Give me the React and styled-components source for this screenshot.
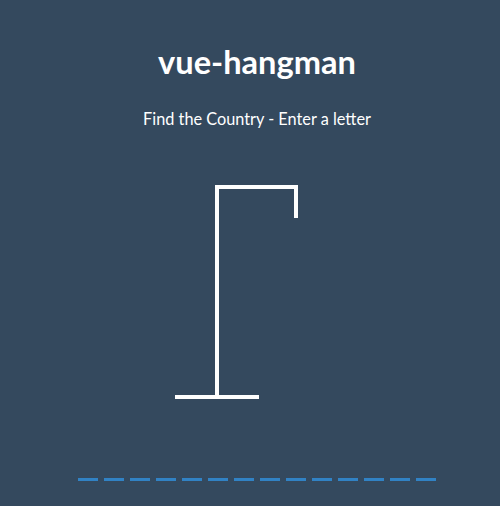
import React from "react";
import styled, { createGlobalStyle } from "styled-components";

const Global = createGlobalStyle`
  html, body { margin: 0; padding: 0; background: #34495e; }
  body { font-family: Lato, "Open Sans", sans-serif; color: #fff; }
`;

const Page = styled.div`
  width: 500px;
  height: 506px;
  box-sizing: border-box;
  padding-left: 14px;
  background: #34495e;
  display: flex;
  flex-direction: column;
  align-items: center;
  overflow: hidden;
`;

const Title = styled.h1`
  margin: 43px 0 0;
  font-size: 32.6px;
  font-weight: 700;
  line-height: 38px;
  color: #fff;
`;

const Subtitle = styled.p`
  margin: 28px 0 0;
  font-size: 16.3px;
  line-height: 19px;
  font-weight: 400;
  color: #fff;
`;

const Gallows = styled.svg`
  display: block;
  margin-top: 42px;
  width: 200px;
  height: 240px;
`;

const Word = styled.div`
  display: flex;
  gap: 6px;
  justify-content: center;
  margin-top: 68px;
`;

const Dash = styled.span`
  display: block;
  width: 20px;
  height: 3px;
  background: #3182c4;
`;

export default function App() {
  const letters = Array.from({ length: 14 });
  return (
    <Page>
      <Global />
      <Title>vue-hangman</Title>
      <Subtitle>Find the Country - Enter a letter</Subtitle>
      <Gallows viewBox="0 0 200 240">
        <polyline
          points="60,227 60,17 139,17 139,48"
          fill="none"
          stroke="#fff"
          strokeWidth="4"
          strokeLinejoin="miter"
          strokeLinecap="butt"
        />
        <line x1="18" y1="227" x2="102" y2="227" stroke="#fff" strokeWidth="4" strokeLinecap="butt" />
      </Gallows>
      <Word>
        {letters.map((_, i) => (
          <Dash key={i} />
        ))}
      </Word>
    </Page>
  );
}
